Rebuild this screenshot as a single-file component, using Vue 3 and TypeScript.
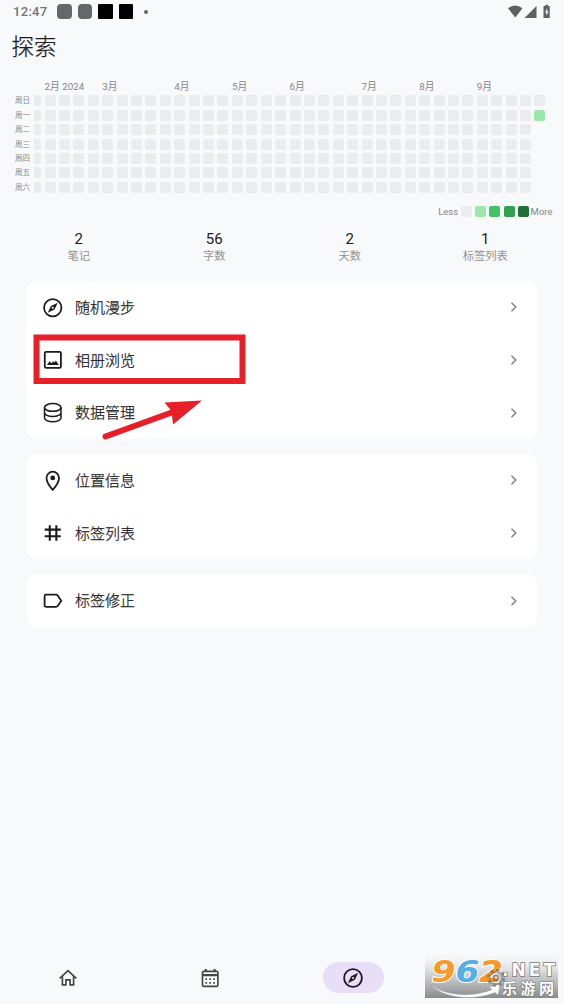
<script setup lang="ts">
interface Item { icon: string; label: string }

const weekdays: string[] = ['周日', '周一', '周二', '周三', '周四', '周五', '周六']
const months: { col: number; text: string }[] = [
  { col: 1, text: '2月 2024' },
  { col: 5, text: '3月' },
  { col: 10, text: '4月' },
  { col: 14, text: '5月' },
  { col: 18, text: '6月' },
  { col: 23, text: '7月' },
  { col: 27, text: '8月' },
  { col: 31, text: '9月' },
]
const weeks = Array.from({ length: 36 }, (_, w) =>
  Array.from({ length: w === 35 ? 2 : 7 }, (_, d) => (w === 35 && d === 1 ? 1 : 0)),
)
const stats = [
  { value: 2, label: '笔记' },
  { value: 56, label: '字数' },
  { value: 2, label: '天数' },
  { value: 1, label: '标签列表' },
]
const groups: Item[][] = [
  [
    { icon: 'compass', label: '随机漫步' },
    { icon: 'image', label: '相册浏览' },
    { icon: 'database', label: '数据管理' },
  ],
  [
    { icon: 'pin', label: '位置信息' },
    { icon: 'hash', label: '标签列表' },
  ],
  [{ icon: 'tag', label: '标签修正' }],
]
</script>

<template>
  <div class="screen">
    <header class="status">
      <span class="clock">12:47</span>
      <i class="chip gray"></i><i class="chip gray"></i><i class="chip"></i><i class="chip"></i>
      <i class="dot"></i>
      <svg class="signals" width="44" height="16" viewBox="0 0 44 16">
        <path d="M0 4.2Q7-1.4 14.5 4.2L7.3 13.5Z" />
        <path d="M28.5 2V14H16.5Z" />
        <path d="M35.500 2h1.800V.800h2.600V2h1.800v12h-6.200z" />
        <path d="M39.200 4 37 8.500h1.400v3.300L40.500 7.500h-1.300z" fill="#f8f9fb" />
      </svg>
    </header>

    <h1 class="title">探索</h1>

    <section class="heatmap">
      <div class="months">
        <span v-for="m in months" :key="m.col" :style="{ gridColumn: m.col + 1 }">{{ m.text }}</span>
      </div>
      <div class="chart">
        <div class="days"><span v-for="d in weekdays" :key="d">{{ d }}</span></div>
        <div class="weeks">
          <div v-for="(week, w) in weeks" :key="w" class="week">
            <i v-for="(level, d) in week" :key="d" :class="['cell', 'l' + level]"></i>
          </div>
        </div>
      </div>
      <div class="legend">
        <span class="less">Less</span>
        <i v-for="n in 5" :key="n" :class="['cell', 'l' + (n - 1)]"></i>
        <span>More</span>
      </div>
    </section>

    <section class="stats">
      <div v-for="s in stats" :key="s.label" class="stat">
        <b>{{ s.value }}</b><span>{{ s.label }}</span>
      </div>
    </section>

    <main class="groups">
      <section v-for="(group, g) in groups" :key="g" class="card">
        <div v-for="item in group" :key="item.label" class="row">
          <svg class="icon" viewBox="0 0 24 24">
            <g v-if="item.icon === 'compass'">
              <circle cx="12" cy="12" r="9.7" />
              <path class="solid" fill-rule="evenodd" d="M17.6 6.4 14 14l-7.600 3.600L10 10zM12 10.800a1.200 1.200 0 1 0 0 2.400a1.200 1.200 0 0 0 0-2.400z" />
            </g>
            <g v-else-if="item.icon === 'image'">
              <rect x="3.100" y="3.100" width="18" height="18" rx="1.500" />
              <path class="solid" d="M5.500 17.800 8.500 13.700l2.200 2.300 2-2.300 1.300 1.300 1.500-2.300 3.300 5.100z" />
            </g>
            <g v-else-if="item.icon === 'database'" class="thin">
              <ellipse cx="12" cy="6.100" rx="9.200" ry="4.300" />
              <path d="M2.800 6.100v11.400c0 2.500 4.100 4.600 9.200 4.600s9.200-2.100 9.200-4.600V6.100M2.800 11.900c0 2.400 4.100 4.300 9.200 4.300s9.200-1.900 9.200-4.300" />
            </g>
            <g v-else-if="item.icon === 'pin'">
              <path d="M12 1.900a7 7 0 0 0-7 7C5 14.200 12 22.200 12 22.200s7-8 7-13.300a7 7 0 0 0-7-7z" />
              <circle class="solid" cx="12" cy="8.800" r="2.700" />
            </g>
            <path v-else-if="item.icon === 'hash'" class="thick" d="M8.700 3.500v17.500M16 3.500v17.500M3 8.500h18M3 16h18" />
            <path v-else d="M4.500 5.200h11.200c.700 0 1.300.300 1.600.800L21.500 12l-4.200 6c-.300.500-.900.800-1.600.800H4.500A1.600 1.600 0 0 1 2.900 17.200V6.800A1.600 1.600 0 0 1 4.500 5.200z" />
          </svg>
          <span class="label">{{ item.label }}</span>
          <svg class="chevron" viewBox="0 0 10 12"><path d="m2.500 1.700 4.300 4.300-4.300 4.300" /></svg>
        </div>
      </section>
    </main>

    <nav class="nav">
      <div class="tab">
        <svg viewBox="0 0 24 24"><path d="M2 12.500 12 3.200l10 9.300M5.300 10v10.200h4.200v-6h5v6h4.200V10" /></svg>
      </div>
      <div class="tab">
        <svg viewBox="0 0 24 24">
          <rect x="3" y="4" width="18.500" height="18" rx="1.500" />
          <path d="M7 1.200V4M17.500 1.200V4M3 8.500h18.500" stroke-width="2.600" />
          <path d="M6.500 13.300h2m2.700 0h2m2.700 0h2M6.500 17.800h2m2.700 0h2m2.700 0h2" />
        </svg>
      </div>
      <div class="tab active">
        <svg viewBox="0 0 24 24">
          <circle cx="12" cy="12" r="9.700" />
          <path class="solid" fill-rule="evenodd" d="M17.600 6.400 14 14l-7.600 3.600L10 10zM12 10.800a1.200 1.200 0 1 0 0 2.400a1.200 1.200 0 0 0 0-2.400z" />
        </svg>
      </div>
      <div class="tab settings">
        <svg viewBox="0 0 24 24">
          <circle cx="12" cy="12" r="9.500" stroke-dasharray="4 3.460" stroke-width="2.500" />
          <circle cx="12" cy="12" r="7.500" stroke-width="1.500" /><circle cx="12" cy="12" r="3" />
        </svg>
      </div>
    </nav>

    <svg class="marks" width="215" height="110" viewBox="0 0 215 110">
      <rect x="3.500" y="4.500" width="206" height="43.500" />
      <path class="shaft" d="M72.500 103.500 140 79" />
      <path class="head" d="M169 67.500 131.500 69.500 138.500 78 140 91.500z" />
    </svg>

    <svg class="watermark" width="133" height="43" viewBox="0 0 133 43">
      <defs>
        <linearGradient id="plate" x1="0" y1="0" x2="0" y2="1">
          <stop offset="0" stop-color="#f3f4f5" stop-opacity=".25" />
          <stop offset=".5" stop-color="#bdbec0" stop-opacity=".8" />
          <stop offset="1" stop-color="#838485" stop-opacity=".95" />
        </linearGradient>
      </defs>
      <rect width="133" height="43" fill="url(#plate)" />
      <path class="swoosh" d="M6 30C22 42 50 42 67 34.500L64 32 75.500 28.500 73 40 70 37.500C50 45.500 20 44.500 6 30z" />
      <g class="digits">
        <text x="6.500" y="26.500" textLength="24" lengthAdjust="spacingAndGlyphs" fill="#f79a2b">9</text>
        <text x="30.500" y="26.500" textLength="24" lengthAdjust="spacingAndGlyphs" fill="#55aee5">6</text>
        <text x="54" y="26.500" textLength="24" lengthAdjust="spacingAndGlyphs" fill="#f79a2b">2</text>
      </g>
      <text class="net" x="77" y="20.500" textLength="53">.NET</text>
      <text class="site" x="77" y="38.500" textLength="52">乐游网</text>
    </svg>
  </div>
</template>

<style>
body { background: #f8f9fb; }
</style>

<style scoped>
.screen {
  position: relative;
  box-sizing: border-box;
  width: 564px;
  height: 1004px;
  overflow: hidden;
  display: flex;
  flex-direction: column;
  background: #f8f9fb;
  color: #1d1b20;
  font-family: Roboto, "Noto Sans CJK SC", sans-serif;
}
.status { height: 23px; display: flex; align-items: center; padding: 0 12px 0 13px; flex: none; }
.clock { width: 44px; font-size: 13px; letter-spacing: .3px; color: #737577; font-weight: 500; }
.chip { width: 14.500px; height: 14.500px; margin-right: 6px; border-radius: 1px; background: #000; }
.chip.gray { background: #666867; border-radius: 4px; }
.dot { width: 4px; height: 4px; border-radius: 50%; background: #666; margin-left: 5px; }
.signals { margin-left: auto; fill: #5f6061; }
.title { margin: 6px 0 0 11.500px; height: 36px; line-height: 36px; font-size: 22.500px; font-weight: 300; -webkit-text-stroke: .25px #1d1b20; }
.heatmap { margin-top: 15px; height: 141px; flex: none; color: #858688; }
.months { display: grid; grid-template-columns: repeat(36, 14.410px); margin-left: 30.200px; height: 15.300px; font-size: 9.800px; line-height: 13px; }
.months span { white-space: nowrap; width: 0; }
.chart { display: flex; height: 101px; }
.days { width: 19px; padding-left: 15px; display: flex; flex-direction: column; font-size: 7.500px; }
.days span { height: 14.410px; line-height: 11px; }
.weeks { flex: 1; display: flex; overflow: hidden; gap: 3.410px; }
.week { display: flex; flex-direction: column; gap: 3.410px; }
.week:first-child { margin-left: -3.800px; }
.cell { display: block; flex: none; width: 11px; height: 11px; border-radius: 2px; background: #ebecee; }
.l1 { background: #9be9a8; }
.l2 { background: #40c463; }
.l3 { background: #30a14e; }
.l4 { background: #216e39; }
.legend { display: flex; justify-content: flex-end; align-items: center; gap: 3.410px; padding-right: 11.500px; height: 11px; margin-top: 9.500px; font-size: 9.500px; }
.legend span { margin-left: -2px; }
.legend .less { margin: 0 -1px 0 0; }
.stats { display: grid; grid-template-columns: repeat(4, 1fr); margin: 9px 11px 0; height: 51px; flex: none; text-align: center; }
.stat { display: flex; flex-direction: column; }
.stat b { font-size: 15px; line-height: 19px; font-weight: 400; }
.stat span { font-size: 11.300px; line-height: 15px; color: #929395; }
.groups { display: flex; flex-direction: column; gap: 15px; margin: 0 26px; }
.card { background: #fff; border-radius: 12px; }
.row { height: 52.700px; display: flex; align-items: center; padding: 0 19px 0 16px; }
.icon { width: 21.500px; height: 21.500px; margin-right: 11.500px; }
.icon, .tab svg { fill: none; stroke: #1d1b20; stroke-width: 2; }
.icon .solid, .tab .solid { fill: #1d1b20; stroke: none; }
.thin { stroke-width: 1.700; }
.thick { stroke-width: 2.300; }
.label { font-size: 15px; line-height: 22px; padding-top: 1px; font-weight: 300; -webkit-text-stroke: .25px #1d1b20; }
.chevron { width: 10px; height: 12px; margin-left: auto; fill: none; stroke: #858587; stroke-width: 1.500; }
.nav { margin-top: auto; height: 53px; padding: 0 37.500px 0 37px; display: flex; justify-content: space-between; align-items: center; flex: none; }
.tab { width: 61px; height: 31px; border-radius: 16px; display: flex; align-items: center; justify-content: center; }
.tab svg { width: 20px; height: 20px; stroke: #444548; }
.tab.active { background: #e8def8; }
.tab.active svg { width: 22px; height: 22px; stroke: #1d192b; }
.tab.settings { z-index: 1; opacity: .5; }
.marks { position: absolute; left: 33px; top: 333px; fill: none; stroke: #e61f29; }
.marks rect { stroke-width: 6; }
.marks .shaft { stroke-width: 6; stroke-linecap: round; }
.marks .head { fill: #e61f29; stroke: none; }
.watermark { position: absolute; left: 425px; top: 955px; overflow: visible; }
.digits { font-family: "DejaVu Sans", sans-serif; font-size: 31px; font-weight: 700; font-style: italic; stroke: #fff; stroke-width: 2; paint-order: stroke; }
.net { font-family: "DejaVu Sans", sans-serif; font-size: 17px; font-weight: 700; fill: #fff; stroke: #77787a; stroke-width: 1.500; paint-order: stroke; }
.site { font-family: "Noto Sans CJK SC", sans-serif; font-size: 15px; font-weight: 700; fill: #fff; stroke: #77787a; stroke-width: 1.200; paint-order: stroke; }
.swoosh { fill: #fff; stroke: #999a9c; stroke-width: .5; }
</style>
